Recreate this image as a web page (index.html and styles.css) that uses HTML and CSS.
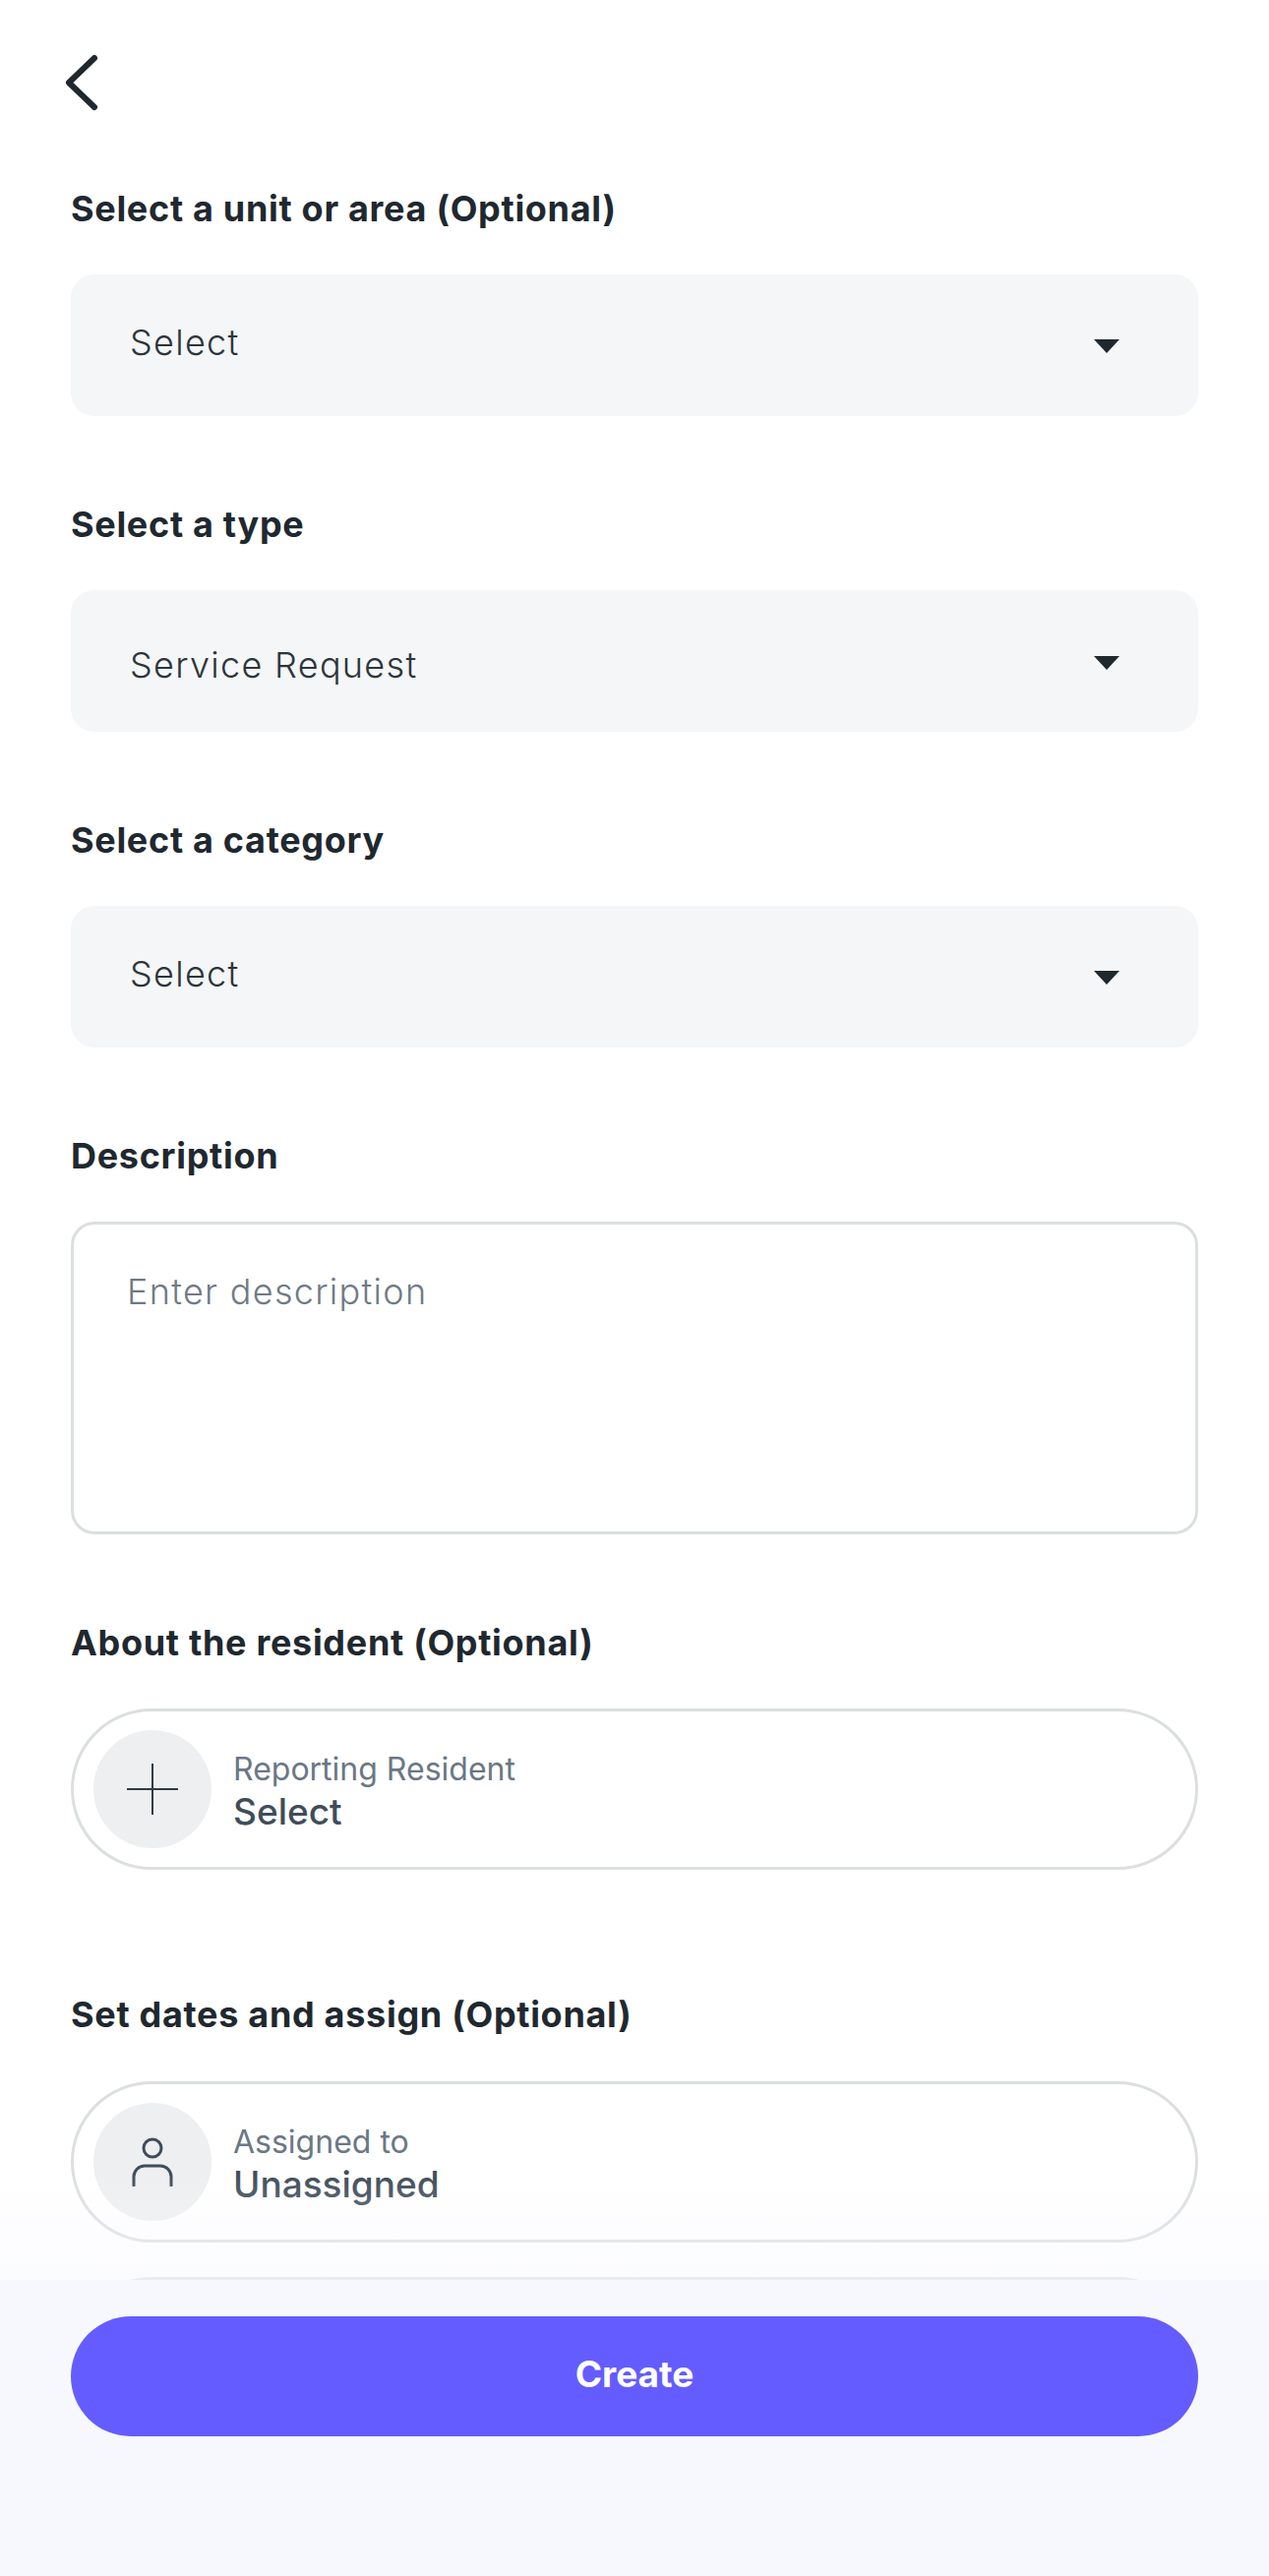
FILE: index.html
```html
<!DOCTYPE html>
<html lang="en">
<head>
    <meta charset="UTF-8">
    <meta name="viewport" content="width=device-width, initial-scale=1.0">
    <title>New Service Request</title>
    <link rel="stylesheet" href="styles.css">
</head>
<body>
    <div class="screen">
        <header class="top-bar">
            <svg class="back-icon" width="36" height="60" viewBox="0 0 36 60"><path d="M31 5 5 30l26 25" /></svg>
        </header>

        <main class="form">
            <section class="field field-select">
                <h2 class="field-label">Select a unit or area (Optional)</h2>
                <div class="select-box">
                    <span class="select-value">Select</span>
                    <span class="select-arrow"></span>
                </div>
            </section>

            <section class="field field-select">
                <h2 class="field-label">Select a type</h2>
                <div class="select-box select-box-filled">
                    <span class="select-value">Service Request</span>
                    <span class="select-arrow"></span>
                </div>
            </section>

            <section class="field field-select">
                <h2 class="field-label">Select a category</h2>
                <div class="select-box">
                    <span class="select-value">Select</span>
                    <span class="select-arrow"></span>
                </div>
            </section>

            <section class="field">
                <h2 class="field-label">Description</h2>
                <div class="text-area">Enter description</div>
            </section>

            <section class="field">
                <h2 class="field-label">About the resident (Optional)</h2>
                <div class="pill-row">
                    <span class="pill-icon">
                        <svg class="plus-icon" width="52" height="52" viewBox="0 0 52 52"><path d="M26 0v52M0 26h52" /></svg>
                    </span>
                    <div class="pill-text">
                        <span class="pill-caption">Reporting Resident</span>
                        <span class="pill-value">Select</span>
                    </div>
                </div>
            </section>

            <section class="field field-dates">
                <h2 class="field-label">Set dates and assign (Optional)</h2>
                <div class="pill-row">
                    <span class="pill-icon">
                        <svg class="person-icon" width="42" height="50" viewBox="0 0 42 50"><circle cx="21" cy="11" r="9" /><path d="M2 49V40c0-6 5-11 11-11h16c6 0 11 5 11 11v9" /></svg>
                    </span>
                    <div class="pill-text">
                        <span class="pill-caption">Assigned to</span>
                        <span class="pill-value">Unassigned</span>
                    </div>
                </div>
                <div class="pill-row pill-row-next"></div>
            </section>
        </main>

        <div class="fade"></div>
        <footer class="footer">
            <button class="create-btn">Create</button>
        </footer>
    </div>
</body>
</html>
```

FILE: styles.css
```css
* {
    box-sizing: border-box;
}
body {
    margin: 0;
    background-color: #fff;
    font-family: Inter, "Open Sans", "Liberation Sans", sans-serif;
    color: #20282f;
}
.screen {
    position: relative;
    height: 2619px;
    overflow: hidden;
}
.top-bar {
    height: 188px;
    padding: 54px 0 0 65px;
}
.back-icon {
    display: block;
    fill: none;
    stroke: #20282f;
    stroke-width: 6;
    stroke-linecap: round;
    stroke-linejoin: round;
}
.form {
    display: flex;
    flex-direction: column;
    padding: 0 72px;
}
.field-label {
    height: 48px;
    margin: 0 0 43px;
    font-size: 36px;
    font-weight: 700;
    line-height: 48px;
    letter-spacing: 0.7px;
    color: #20282f;
}
.field-select {
    margin-bottom: 86px;
}
.select-box {
    display: flex;
    align-items: center;
    justify-content: space-between;
    height: 144px;
    padding: 0 80px 0 60px;
    border-radius: 24px;
    background-color: #f4f6f7;
}
.select-box-filled {
    padding-top: 8px;
}
.select-value {
    margin-top: -6px;
    font-size: 36px;
    font-weight: 300;
    letter-spacing: 1.3px;
    color: #2c343b;
}
.select-box-filled .select-value {
    margin-top: 0;
}
.select-arrow {
    width: 0;
    height: 0;
    margin-top: 2px;
    border-left: 13px solid transparent;
    border-right: 13px solid transparent;
    border-top: 14px solid #20282f;
}
.select-box-filled .select-arrow {
    margin-top: -5px;
}
.text-area {
    height: 318px;
    margin-bottom: 86px;
    padding: 44px 54px;
    border: 3px solid #dcdfe0;
    border-radius: 24px;
    font-size: 36px;
    font-weight: 300;
    line-height: 48px;
    letter-spacing: 1.3px;
    color: #6f7a85;
}
.pill-row {
    display: flex;
    align-items: center;
    gap: 22px;
    height: 164px;
    padding: 0 20px;
    border: 3px solid #dcdfe0;
    border-radius: 82px;
}
.pill-row-next {
    margin-top: 35px;
}
.pill-icon {
    display: flex;
    align-items: center;
    justify-content: center;
    flex: none;
    width: 120px;
    height: 120px;
    border-radius: 50%;
    background-color: #edeff0;
}
.plus-icon {
    fill: none;
    stroke: #2f3b46;
    stroke-width: 2;
}
.person-icon {
    fill: none;
    stroke: #3f4d5a;
    stroke-width: 3;
    stroke-linecap: round;
}
.pill-text {
    display: flex;
    flex-direction: column;
    padding-top: 6px;
}
.pill-caption {
    font-size: 32px;
    line-height: 40px;
    color: #6b7785;
}
.pill-value {
    font-size: 37px;
    font-weight: 500;
    line-height: 46px;
    color: #3f4d5a;
}
.field-dates {
    margin-top: 123px;
}
.field-dates .field-label {
    margin-bottom: 44px;
}
.fade {
    position: absolute;
    left: 0;
    right: 0;
    bottom: 301px;
    height: 110px;
    background: linear-gradient(rgba(247, 248, 254, 0), rgba(247, 248, 254, 0.5));
    pointer-events: none;
}
.footer {
    position: absolute;
    left: 0;
    right: 0;
    bottom: 0;
    height: 301px;
    padding: 37px 72px 0;
    background-color: #f7f8fe;
}
.create-btn {
    display: block;
    width: 100%;
    height: 122px;
    padding: 0 0 5px;
    border: none;
    border-radius: 61px;
    background-color: #645cff;
    font-family: inherit;
    font-size: 37px;
    font-weight: 700;
    color: #fff;
}
```
